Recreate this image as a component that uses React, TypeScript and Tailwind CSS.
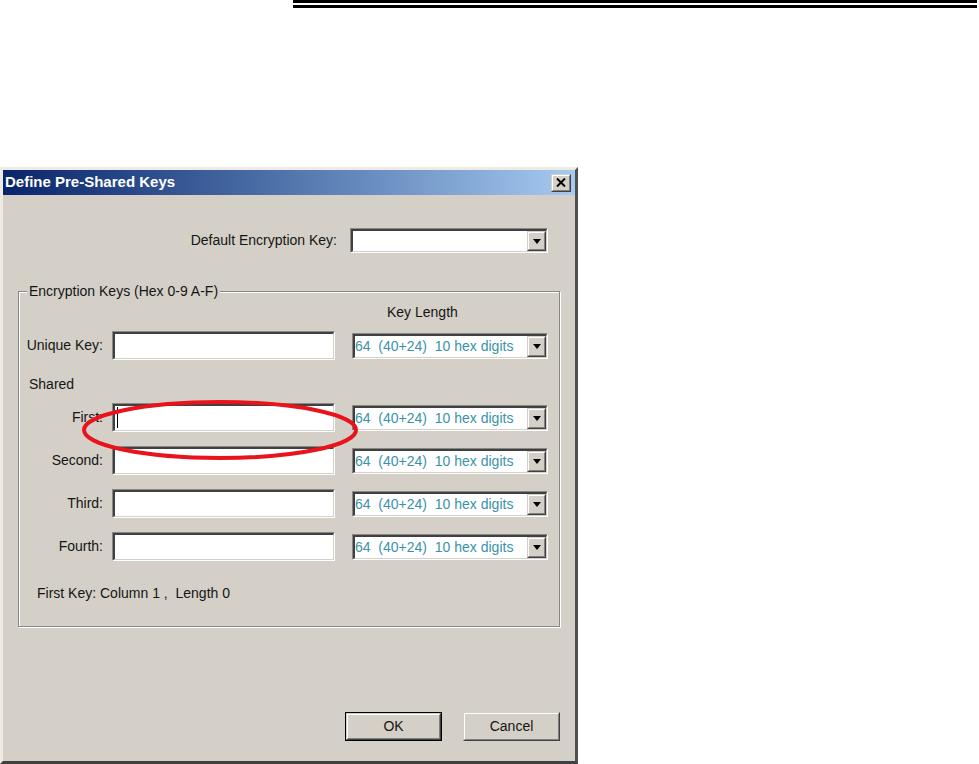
import React from 'react';

const teal = 'text-[#3a92aa]';

function Sunken({ className = '', children }: { className?: string; children?: React.ReactNode }) {
  return (
    <div className={'border border-t-[#8a8884] border-l-[#8a8884] border-b-white border-r-white ' + className}>
      <div className="flex h-full border border-t-2 border-l-2 border-t-[#404040] border-l-[#404040] border-b-[#d4d0c8] border-r-[#d4d0c8] bg-white">
        {children}
      </div>
    </div>
  );
}

function Raised({ className = '', children }: { className?: string; children?: React.ReactNode }) {
  return (
    <div className={'border border-t-[#d4d0c8] border-l-[#d4d0c8] border-b-[#404040] border-r-[#404040] bg-[#d4d0c8] ' + className}>
      <div className="flex h-full w-full items-center justify-center border border-t-white border-l-white border-b-[#808080] border-r-[#808080]">
        {children}
      </div>
    </div>
  );
}

function Combo({ value, className = '' }: { value?: string; className?: string }) {
  return (
    <Sunken className={className}>
      <span className={'flex-1 self-center whitespace-pre leading-none ' + teal}>{value}</span>
      <Raised className="h-full w-[19px] shrink-0">
        <svg width="8" height="5" viewBox="0 0 8 5">
          <path d="M0 0h8L4 5z" fill="#000" />
        </svg>
      </Raised>
    </Sunken>
  );
}

const keyLen = '64  (40+24)  10 hex digits';

function KeyRow({ label, cursor }: { label: string; cursor?: boolean }) {
  return (
    <div className="flex items-center">
      <span className="w-[84px] text-right">{label}</span>
      <Sunken className="ml-[9px] h-[29px] w-[223px]">
        {cursor && <span className="ml-[2px] mt-[1px] h-[21px] w-px bg-black" />}
      </Sunken>
      <Combo value={keyLen} className="ml-[17px] h-[26px] w-[196px]" />
    </div>
  );
}

export default function App() {
  return (
    <div className="relative h-[764px] w-[979px] overflow-hidden bg-white font-['Liberation_Sans',Arial,sans-serif] text-[14px] text-[#151515]">
      <div className="ml-[293px] w-[684px]">
        <div className="h-[3px] bg-black" />
        <div className="mt-[2px] h-[3px] bg-black" />
      </div>

      <div className="mt-[159px] flex h-[597px] w-[578px] flex-col border-[3px] border-t-[#eeeae4] border-l-[#eeeae4] border-b-[#404040] border-r-[#505050] bg-[#d4d0c8]">
        <div className="flex h-[25px] shrink-0 items-center justify-between bg-gradient-to-r from-[#0a246a] to-[#a6caf0] pl-[2px] pr-[4px]">
          <span className="text-[15px] font-bold text-white">Define Pre-Shared Keys</span>
          <Raised className="h-[18px] w-[20px]">
            <svg width="10" height="9" viewBox="0 0 10 9">
              <path d="M1 0.5l8 8M9 0.5l-8 8" stroke="#000" strokeWidth="2" />
            </svg>
          </Raised>
        </div>

        <div className="flex flex-1 flex-col">
          <div className="mt-[33px] flex items-center justify-end pr-[27px]">
            <span>Default Encryption Key:</span>
            <Combo className="ml-[13px] h-[25px] w-[198px]" />
          </div>

          <fieldset className="ml-[15px] mt-[30px] w-[542px] border border-[#8a8884] pb-[25px] shadow-[1px_1px_0_#fff,inset_1px_1px_0_#fff]">
            <legend className="ml-[8px] bg-[#d4d0c8] px-[2px] leading-[16px]">Encryption Keys (Hex 0-9 A-F)</legend>
            <div className="ml-[368px] mt-[5px] leading-[16px]">Key Length</div>
            <div className="mt-[11px]">
              <KeyRow label="Unique Key:" />
            </div>
            <div className="ml-[10px] mt-[16px] leading-[16px]">Shared</div>
            <div className="mt-[11px] flex flex-col gap-[14px]">
              <KeyRow label="First:" cursor />
              <KeyRow label="Second:" />
              <KeyRow label="Third:" />
              <KeyRow label="Fourth:" />
            </div>
            <div className="ml-[18px] mt-[24px] leading-[16px]">First Key: Column 1 ,&nbsp; Length 0</div>
          </fieldset>

          <div className="mt-[85px] flex justify-end gap-[21px] pr-[15px]">
            <div className="border border-black">
              <Raised className="h-[27px] w-[95px]">OK</Raised>
            </div>
            <Raised className="h-[29px] w-[97px]">Cancel</Raised>
          </div>
        </div>
      </div>

      <svg className="absolute left-[81px] top-[399px]" width="278" height="62" viewBox="0 0 278 62">
        <ellipse cx="139" cy="31" rx="136" ry="28" fill="none" stroke="#e8131b" strokeWidth="4" />
      </svg>
    </div>
  );
}
